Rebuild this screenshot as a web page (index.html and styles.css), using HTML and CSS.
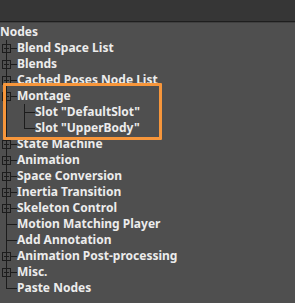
FILE: index.html
```html
<!DOCTYPE html>
<html>
<head>
<meta charset="utf-8">
<link rel="stylesheet" href="styles.css">
</head>
<body>
<div class="topbar"></div>
<div class="panel">
  <div class="tree">
    <div class="row root"><span class="label">Nodes</span></div>
    <div class="row"><svg class="g" width="17" height="16"><path d="M6.5 0V16M10 8.5H17" stroke="#1c1c1c"/><rect x="2.5" y="4.5" width="8" height="8" fill="none" stroke="#1c1c1c"/><path d="M4 8.5H9M6.5 6V11" stroke="#1c1c1c"/></svg><span class="label">Blend Space List</span></div>
    <div class="row"><svg class="g" width="17" height="16"><path d="M6.5 0V16M10 8.5H17" stroke="#1c1c1c"/><rect x="2.5" y="4.5" width="8" height="8" fill="none" stroke="#1c1c1c"/><path d="M4 8.5H9M6.5 6V11" stroke="#1c1c1c"/></svg><span class="label">Blends</span></div>
    <div class="row"><svg class="g" width="17" height="16"><path d="M6.5 0V16M10 8.5H17" stroke="#1c1c1c"/><rect x="2.5" y="4.5" width="8" height="8" fill="none" stroke="#1c1c1c"/><path d="M4 8.5H9M6.5 6V11" stroke="#1c1c1c"/></svg><span class="label">Cached Poses Node List</span></div>
    <div class="row"><svg class="g" width="17" height="16"><path d="M6.5 0V16M10 8.5H17" stroke="#1c1c1c"/><rect x="2.5" y="4.5" width="8" height="8" fill="none" stroke="#1c1c1c"/><path d="M4 8.5H9" stroke="#1c1c1c"/></svg><span class="label">Montage</span></div>
    <div class="row"><svg class="g" width="35" height="16"><path d="M6.5 0V16M24.5 0V16M24 8.5H35" stroke="#1c1c1c"/></svg><span class="label">Slot "DefaultSlot"</span></div>
    <div class="row"><svg class="g" width="35" height="16"><path d="M6.5 0V16M24.5 0V8.5M24 8.5H35" stroke="#1c1c1c"/></svg><span class="label">Slot "UpperBody"</span></div>
    <div class="row"><svg class="g" width="17" height="16"><path d="M6.5 0V16M10 8.5H17" stroke="#1c1c1c"/><rect x="2.5" y="4.5" width="8" height="8" fill="none" stroke="#1c1c1c"/><path d="M4 8.5H9M6.5 6V11" stroke="#1c1c1c"/></svg><span class="label">State Machine</span></div>
    <div class="row"><svg class="g" width="17" height="16"><path d="M6.5 0V16M10 8.5H17" stroke="#1c1c1c"/><rect x="2.5" y="4.5" width="8" height="8" fill="none" stroke="#1c1c1c"/><path d="M4 8.5H9M6.5 6V11" stroke="#1c1c1c"/></svg><span class="label">Animation</span></div>
    <div class="row"><svg class="g" width="17" height="16"><path d="M6.5 0V16M10 8.5H17" stroke="#1c1c1c"/><rect x="2.5" y="4.5" width="8" height="8" fill="none" stroke="#1c1c1c"/><path d="M4 8.5H9M6.5 6V11" stroke="#1c1c1c"/></svg><span class="label">Space Conversion</span></div>
    <div class="row"><svg class="g" width="17" height="16"><path d="M6.5 0V16M10 8.5H17" stroke="#1c1c1c"/><rect x="2.5" y="4.5" width="8" height="8" fill="none" stroke="#1c1c1c"/><path d="M4 8.5H9M6.5 6V11" stroke="#1c1c1c"/></svg><span class="label">Inertia Transition</span></div>
    <div class="row"><svg class="g" width="17" height="16"><path d="M6.5 0V16M10 8.5H17" stroke="#1c1c1c"/><rect x="2.5" y="4.5" width="8" height="8" fill="none" stroke="#1c1c1c"/><path d="M4 8.5H9M6.5 6V11" stroke="#1c1c1c"/></svg><span class="label">Skeleton Control</span></div>
    <div class="row"><svg class="g" width="17" height="16"><path d="M6.5 0V16M6 8.5H17" stroke="#1c1c1c"/></svg><span class="label">Motion Matching Player</span></div>
    <div class="row"><svg class="g" width="17" height="16"><path d="M6.5 0V16M6 8.5H17" stroke="#1c1c1c"/></svg><span class="label">Add Annotation</span></div>
    <div class="row"><svg class="g" width="17" height="16"><path d="M6.5 0V16M10 8.5H17" stroke="#1c1c1c"/><rect x="2.5" y="4.5" width="8" height="8" fill="none" stroke="#1c1c1c"/><path d="M4 8.5H9M6.5 6V11" stroke="#1c1c1c"/></svg><span class="label">Animation Post-processing</span></div>
    <div class="row"><svg class="g" width="17" height="16"><path d="M6.5 0V16M10 8.5H17" stroke="#1c1c1c"/><rect x="2.5" y="4.5" width="8" height="8" fill="none" stroke="#1c1c1c"/><path d="M4 8.5H9M6.5 6V11" stroke="#1c1c1c"/></svg><span class="label">Misc.</span></div>
    <div class="row"><svg class="g" width="17" height="16"><path d="M6.5 0V8.5M6 8.5H17" stroke="#1c1c1c"/></svg><span class="label">Paste Nodes</span></div>
  </div>
  <div class="highlight"></div>
</div>
</body>
</html>
```
FILE: styles.css
```css
html, body {
  margin: 0;
  padding: 0;
  background: #4f4f4f;
  width: 295px;
  height: 303px;
  overflow: hidden;
}
.topbar {
  height: 21px;
  background: #363636;
  border-bottom: 1px solid #1e1e1e;
  box-shadow: 0 1px 0 #404040;
}
.panel {
  position: relative;
  padding-top: 2px;
}
.tree {
  display: flex;
  flex-direction: column;
}
.row {
  display: flex;
  align-items: center;
  height: 16px;
  font-family: "Noto Sans", sans-serif;
  font-weight: 700;
  font-size: 12px;
  color: #ececec;
  white-space: nowrap;
}
.g {
  flex: none;
  display: block;
}
.label {
  line-height: 16px;
}
.highlight {
  position: absolute;
  left: 3px;
  top: 61px;
  width: 153px;
  height: 51px;
  border: 3px solid #f7963b;
  border-radius: 1px;
}
```
